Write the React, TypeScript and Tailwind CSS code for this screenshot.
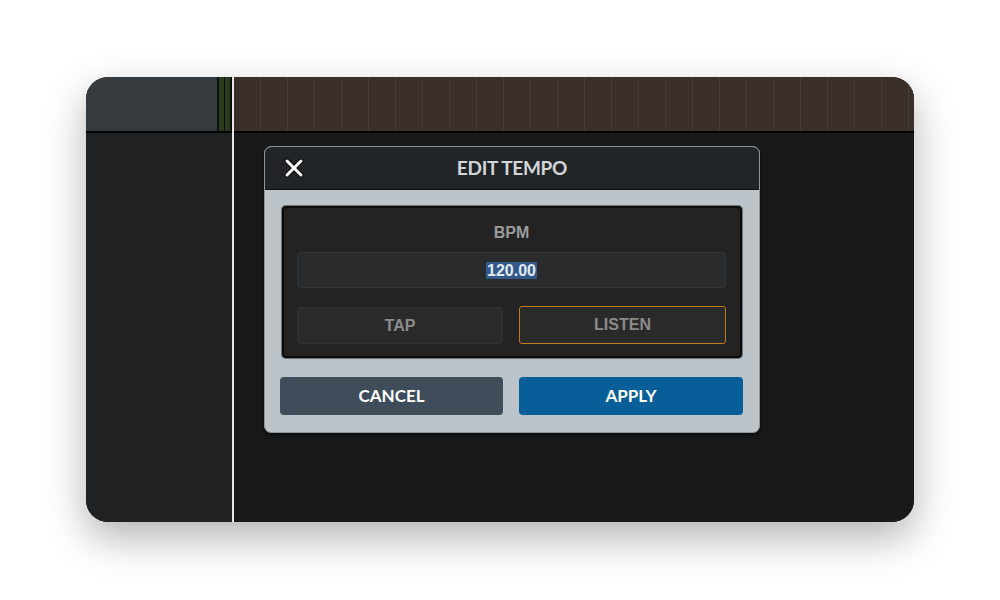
import React from "react";

const gridLines = Array.from({ length: 26 });

const CloseIcon = () => (
  <svg width="20" height="20" viewBox="0 0 20 20">
    <path d="M3 3 L17 17 M17 3 L3 17" stroke="#0c0d0e" strokeWidth="5" strokeLinecap="round" />
    <path d="M3 3 L17 17 M17 3 L3 17" stroke="#ffffff" strokeWidth="3" strokeLinecap="round" />
  </svg>
);

const EditTempoDialog = () => {
  return (
    <div className="absolute left-[30px] top-[69px] w-[496px] h-[287px] rounded-[7px] border border-[#8d959b] bg-[#bdc4c9] overflow-hidden flex flex-col shadow-[0_2px_6px_rgba(0,0,0,0.5)]">
      {/* header */}
      <div className="relative h-[43px] bg-[#222527] flex items-center justify-center border-b border-[#111]">
        <div className="absolute left-[19px] top-[11px]">
          <CloseIcon />
        </div>
        <span className="font-['Lato',sans-serif] font-bold text-[19px] tracking-[-0.3px] text-[#d2d6d9]">
          EDIT TEMPO
        </span>
      </div>

      <div className="flex-1 pl-[15px] pr-[16px] pt-[16px] pb-[16px] flex flex-col">
        {/* inner panel */}
        <div className="ml-[2px] mr-[1px] h-[152px] rounded-[4px] border-2 border-[#0b0b0b] bg-[#232323] shadow-[0_0_0_1px_#6f767b] pl-[13px] pr-[14px] pt-[15px] flex flex-col font-['Liberation_Sans',Arial,sans-serif] font-bold">
          <div className="h-[20px] flex items-center justify-center text-[16px] text-[#9b9b9b]">BPM</div>
          <div className="mt-[9px] h-[36px] rounded-[3px] border border-[#333436] bg-[#2a2b2c] flex items-center justify-center">
            <span className="bg-[#32598a] text-[#e3e9f0] text-[16px] leading-[17px] px-[1px]">120.00</span>
          </div>
          <div className="mt-[19px] flex gap-[16px]">
            <div className="w-[206px] h-[37px] rounded-[3px] border border-[#313234] bg-[#2a2a2b] flex items-center justify-center text-[16px] text-[#8b8b8b]">
              TAP
            </div>
            <div className="flex-1 h-[38px] rounded-[3px] border border-[#c27b18] bg-[#2a2a2b] flex items-center justify-center text-[16px] text-[#8b8b8b] -mt-[1px]">
              LISTEN
            </div>
          </div>
        </div>

        {/* actions */}
        <div className="mt-[19px] flex gap-[16px] font-['Lato',sans-serif] font-bold text-[17px] text-white">
          <div className="w-[223px] h-[38px] rounded-[4px] bg-[#3e4d59] flex items-center justify-center">CANCEL</div>
          <div className="flex-1 h-[38px] rounded-[4px] bg-[#085e99] flex items-center justify-center">APPLY</div>
        </div>
      </div>
    </div>
  );
};

const App = () => {
  return (
    <div className="w-[1000px] h-[600px] bg-white pl-[86px] pt-[77px]">
      <div className="w-[828px] h-[445px] rounded-[22px] overflow-hidden flex bg-[#18191b] shadow-[0_16px_40px_rgba(0,0,0,0.3)]">
        {/* left column */}
        <div className="w-[131px] shrink-0 flex flex-col">
          <div className="h-[54px] bg-[#363b3f]" />
          <div className="h-[2px] bg-black" />
          <div className="flex-1 bg-[#202123]" />
        </div>
        {/* track color strip */}
        <div className="w-[15px] shrink-0 flex flex-col">
          <div className="h-[54px] flex bg-[#0c0e0c]">
            <div className="ml-[2px] w-[5px] bg-[#2a3a1e]" />
            <div className="ml-[1px] w-[5px] bg-[#2a3a1e]" />
          </div>
          <div className="h-[2px] bg-black" />
          <div className="flex-1 bg-[#202123]" />
        </div>
        {/* playhead line */}
        <div className="w-[2px] shrink-0 bg-[#e9e9e9]" />
        {/* timeline */}
        <div className="relative flex-1 min-w-0 flex flex-col">
          <div className="h-[54px] bg-[#3a2f2a] flex overflow-hidden">
            {gridLines.map((_, i) => (
              <div key={i} className="shrink-0 w-[27px] h-full border-r border-[#473b35]" />
            ))}
          </div>
          <div className="h-[2px] bg-black" />
          <div className="flex-1 bg-[#18191b]" />
          <EditTempoDialog />
        </div>
      </div>
    </div>
  );
};

export default App;
